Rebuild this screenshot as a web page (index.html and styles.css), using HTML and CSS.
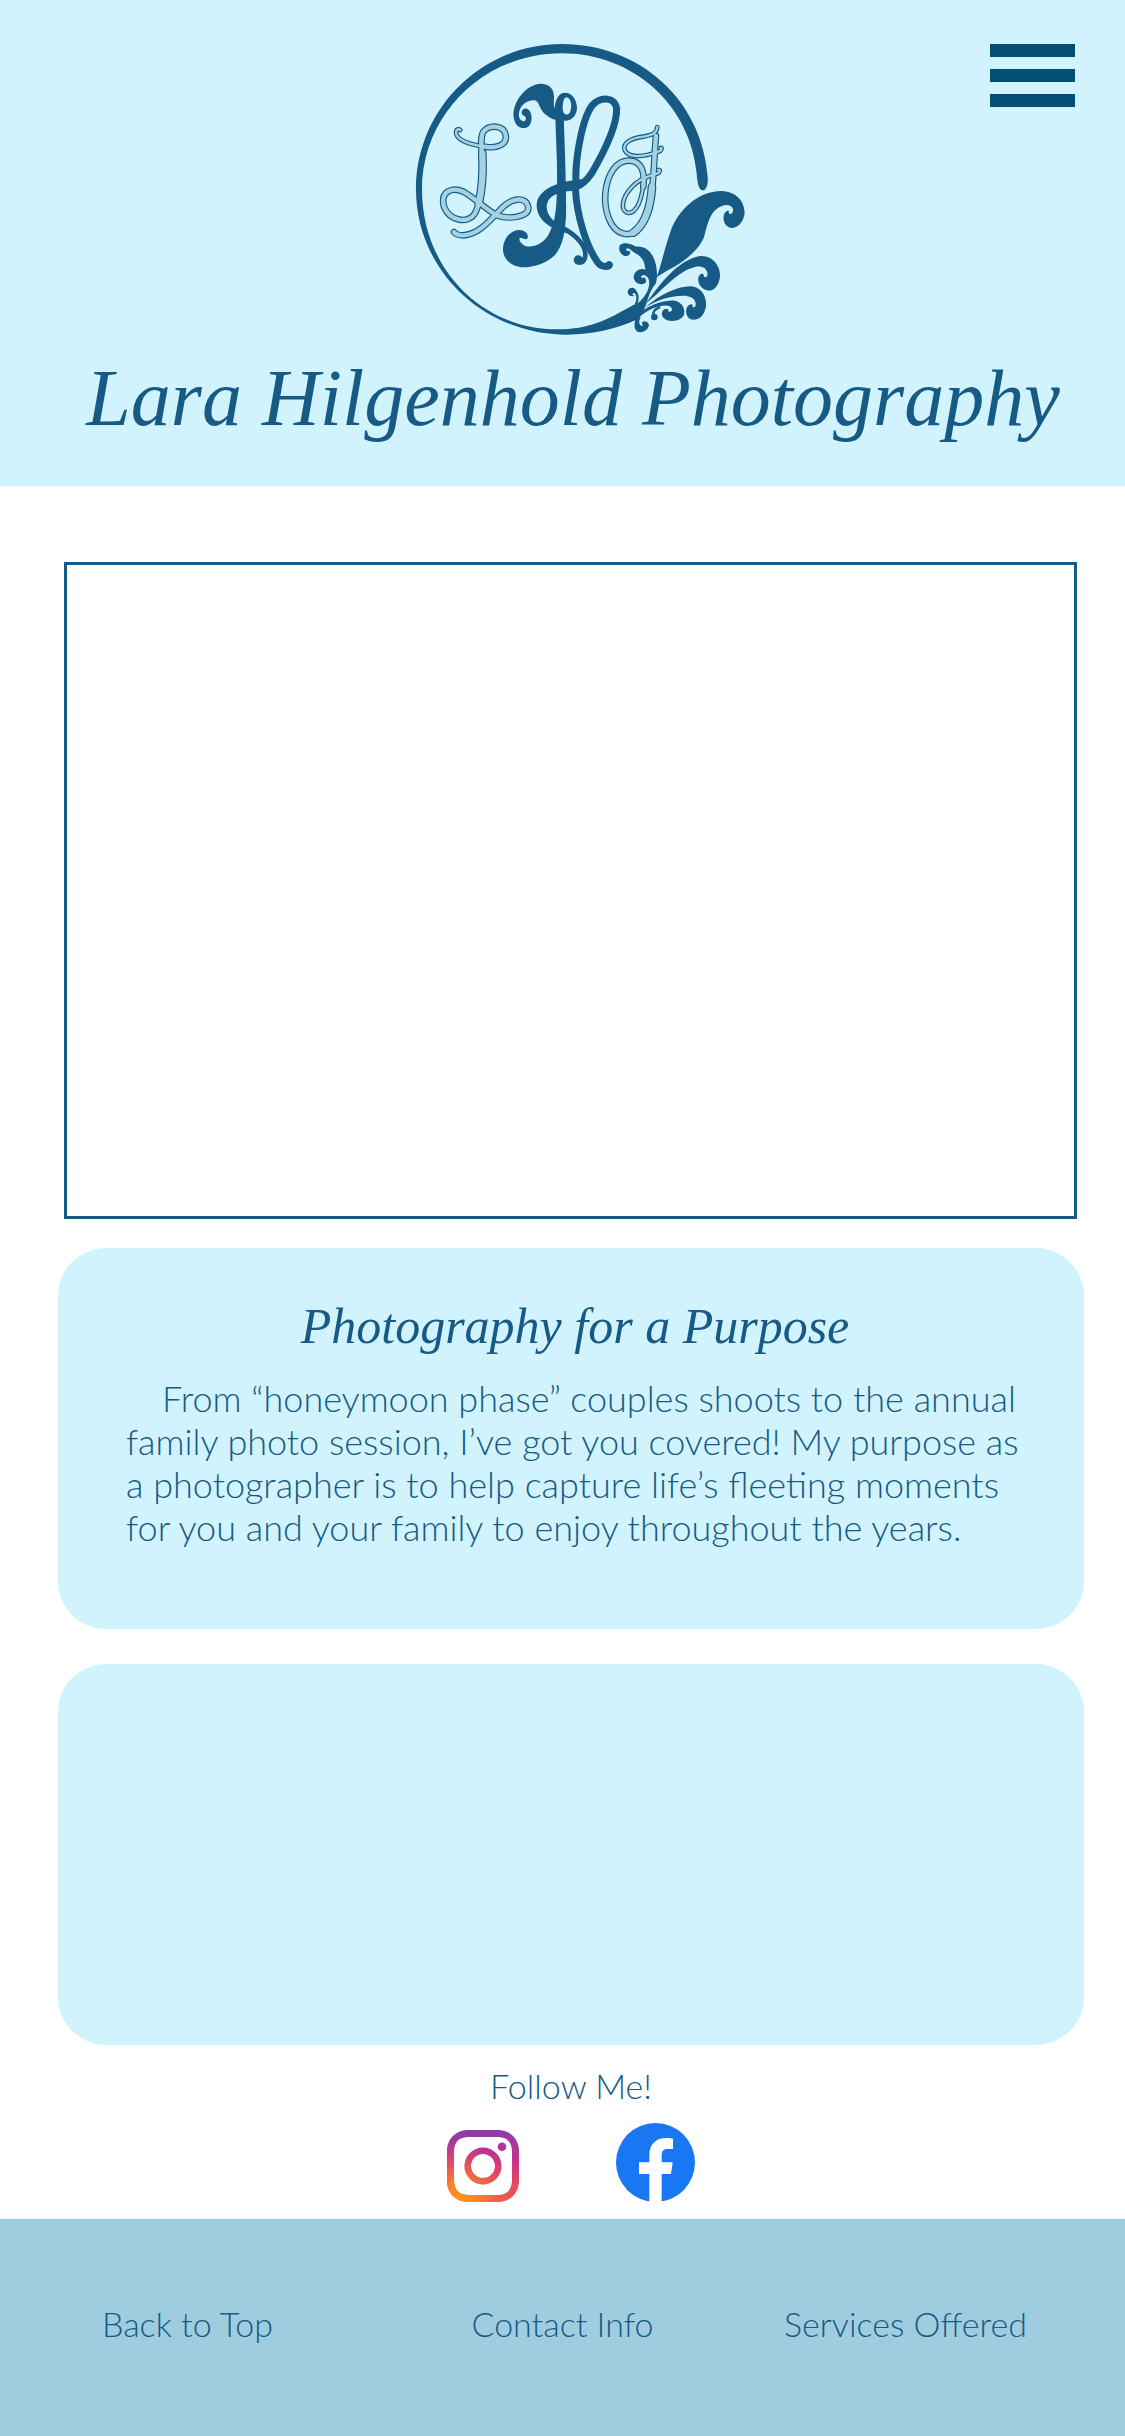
FILE: index.html
```html
<!DOCTYPE html>
<html lang="en">
<head>
<meta charset="utf-8">
<meta name="viewport" content="width=device-width, initial-scale=1">
<title>Lara Hilgenhold Photography</title>
<link rel="stylesheet" href="styles.css">
</head>
<body>
<header class="header" id="top">
  <svg class="logo" viewBox="0 0 1038 960" role="img" aria-label="Lara Hilgenhold Photography monogram">
    <defs>
      <g id="side-wide">
        <path d="M255,350C290,356 322,345 317,315C312,286 270,282 250,305C236,330 250,380 248,430C246,480 240,520 225,550C205,582 150,575 132,530C120,485 155,470 190,485C225,505 255,535 290,556C330,570 388,560 385,532C378,495 330,505 300,540C270,570 240,612 190,616C176,616 166,612 162,606"/>
        <path d="M768,318C762,380 762,470 748,535C730,600 700,614 675,612C630,605 612,540 616,490C622,430 650,390 690,392C725,395 735,425 730,470"/>
      </g>
      <g id="side-narrow">
        <path d="M181,300C170,292 162,308 175,322C190,338 220,345 255,350"/>
        <path d="M772,291C770,312 755,314 730,320C690,325 668,340 674,360C685,385 730,382 775,365C785,362 788,352 782,354"/>
        <path d="M732,440C728,510 710,550 683,549C658,540 668,500 695,472C715,448 745,438 770,431C782,428 782,416 774,420"/>
      </g>
      <g id="side-heavy">
        <path d="M247,370C250,430 246,480 236,520"/>
        <path d="M756,470C752,530 738,580 700,608"/>
      </g>
    </defs>
    <!-- ring -->
    <path class="ink" d="M923,440C905,205 715,42 485,42C244,42 48,237 48,478C48,720 250,914 500,914C580,914 650,897 712,868L735,830L700,825C620,870 570,898 470,898C250,898 66,720 66,478C66,255 250,70 485,70C700,70 870,225 890,430C892,470 900,481 908,481C918,481 925,465 923,440Z"/>
    <!-- centre letter -->
    <path class="ink" fill-rule="evenodd" d="M462,200C462,170 440,160 420,161C375,165 335,220 341,262C345,290 362,296 375,294C392,292 397,270 394,255C390,238 378,232 370,238C362,244 364,256 374,258C380,264 378,274 370,274C358,272 354,258 358,244C364,218 390,208 405,211C420,216 416,240 440,256C455,270 475,272 495,272C520,272 532,250 531,230C528,205 515,188 495,188C475,188 466,210 464,236C460,225 462,210 462,200ZM500,202C514,204 518,232 509,248C500,260 489,252 488,238C488,220 490,203 500,202Z"/>
    <path class="ink" d="M466,260L491,260C495,360 500,500 498,560C494,620 485,650 465,675C440,700 400,713 365,712C330,708 308,685 309,655C312,620 335,600 358,600C378,602 386,614 383,624C378,632 368,624 362,623C354,624 358,640 375,648C400,655 430,640 445,615C460,585 468,560 470,500C474,420 468,340 466,260Z"/>
    <path class="ink" d="M560,448C500,448 412,470 410,525C410,570 450,595 500,610L506,596C470,585 440,560 440,530C442,495 480,482 530,482Z"/>
    <path class="pen pen-thin" d="M485,592C530,615 562,650 555,682C550,702 532,700 530,690"/>
    <circle class="ink" cx="535" cy="690" r="14"/>
    <path class="pen" d="M529,470C522,400 545,270 576,227C600,200 646,198 650,238C650,290 610,370 575,430C560,452 545,465 526,472C530,560 560,650 593,697C605,712 625,712 628,704"/>
    <circle class="ink" cx="626" cy="706" r="11"/>
    <!-- side letters: dark outline first, pale fill over it -->
    <g class="side side-outline">
      <use href="#side-wide" class="wide"/>
      <use href="#side-narrow" class="narrow"/>
      <use href="#side-heavy" class="heavy"/>
    </g>
    <g class="side side-fill">
      <use href="#side-wide" class="wide"/>
      <use href="#side-narrow" class="narrow"/>
      <use href="#side-heavy" class="heavy"/>
    </g>
    <!-- leaves -->
    <path class="ink" d="M770,742C785,700 795,650 815,595C835,545 890,483 965,483C1010,485 1034,515 1034,550C1030,580 1010,596 992,594C970,588 966,560 975,548C980,541 990,540 986,549C990,556 1001,550 999,538C996,526 982,523 968,527C938,536 926,565 915,610C908,650 860,690 815,715C795,725 780,735 770,742Z"/>
    <path class="ink" d="M738,820C775,770 830,690 900,678C940,676 962,710 960,740C955,775 935,785 920,781C898,775 890,750 897,738C904,727 914,732 911,739C916,746 925,740 922,728C917,710 900,708 885,711C830,724 790,780 738,820Z"/>
    <path class="ink" d="M735,832C780,795 830,768 875,769C910,775 920,805 918,830C910,865 890,872 872,868C855,860 855,835 866,826C874,820 882,823 877,830C882,835 889,830 887,820C884,803 868,797 850,797C805,797 770,812 735,832Z"/>
    <path class="ink" d="M708,860C740,825 790,810 825,812C850,818 856,840 852,855C840,875 815,875 800,870C782,862 782,845 793,838C800,834 809,838 804,844C812,848 818,842 815,834C810,825 795,825 780,828C750,836 718,855 712,872Z"/>
    <path class="pen pen-fine" d="M778,832C764,838 757,846 761,856"/>
    <circle class="ink" cx="763" cy="861" r="10"/>
    <path class="ink" d="M716,856C704,864 698,892 710,904C724,911 744,903 747,886C746,875 733,870 727,876C724,883 731,885 727,888C718,888 714,876 722,862Z"/>
    <path class="ink" d="M771,742C773,690 750,645 708,650C692,640 672,635 660,645C652,660 665,680 680,678C690,676 694,667 688,662C680,665 676,659 681,655C692,655 698,668 714,674C735,690 733,705 737,719C720,713 702,724 701,742C703,762 727,769 738,757C740,746 733,739 727,744C721,744 723,735 731,735C752,738 753,770 735,796C728,807 718,820 690,832L712,868C748,830 735,800 768,760Z"/>
    <path class="pen pen-fine" d="M706,826C717,808 714,789 701,780"/>
    <circle class="ink" cx="696" cy="786" r="13"/>
    <circle class="paper" cx="702" cy="793" r="4"/>
  </svg>
  <button class="menu" type="button" aria-label="Menu">
    <span class="menu-bar"></span>
    <span class="menu-bar"></span>
    <span class="menu-bar"></span>
  </button>
  <h1 class="site-title">Lara Hilgenhold Photography</h1>
</header>

<main class="main">
  <div class="frame"></div>
  <section class="card">
    <h2 class="card-title">Photography for a Purpose</h2>
    <p class="card-text">From “honeymoon phase” couples shoots to the annual family photo session, I’ve got you covered! My purpose as a photographer is to help capture life’s fleeting moments for you and your family to enjoy throughout the years.</p>
  </section>
  <section class="card card-second"></section>
  <section class="follow">
    <p class="follow-text">Follow Me!</p>
    <div class="social">
      <a class="social-link" href="#instagram" aria-label="Instagram">
        <svg class="instagram" viewBox="0 0 72 72">
          <defs>
            <linearGradient id="ig-base" x1="0" y1="0" x2="0" y2="1">
              <stop offset="0" stop-color="#8a3aad"/>
              <stop offset=".45" stop-color="#cf3087"/>
              <stop offset=".75" stop-color="#e8485f"/>
              <stop offset="1" stop-color="#ea5a50"/>
            </linearGradient>
            <radialGradient id="ig-warm" gradientUnits="userSpaceOnUse" cx="12" cy="72" r="62">
              <stop offset="0" stop-color="#ff9a14"/>
              <stop offset=".3" stop-color="#fb8228"/>
              <stop offset="1" stop-color="#e8485f" stop-opacity="0"/>
            </radialGradient>
            <path id="ig-shape" fill-rule="evenodd" d="M21,0H51C63,0 72,9 72,21V51C72,63 63,72 51,72H21C9,72 0,63 0,51V21C0,9 9,0 21,0ZM22,7C12,7 7,12 7,22V50C7,60 12,65 22,65H50C60,65 65,60 65,50V22C65,12 60,7 50,7ZM36,17.500A18.500,18.500 0 1 1 36,54.500A18.500,18.500 0 1 1 36,17.500ZM36,24A12,12 0 1 0 36,48A12,12 0 1 0 36,24ZM55,12.500A4.300,4.300 0 1 1 55,21.100A4.300,4.300 0 1 1 55,12.500Z"/>
          </defs>
          <use href="#ig-shape" fill="url(#ig-base)"/>
          <use href="#ig-shape" fill="url(#ig-warm)"/>
        </svg>
      </a>
      <a class="social-link" href="#facebook" aria-label="Facebook">
        <svg class="facebook" viewBox="0 0 237 237">
          <circle cx="118.500" cy="118.500" r="118.500" fill="#1977f3"/>
          <path fill="#fff" d="M100,237V153H69V118H100V97C100,63 120,45 151,45C160,45 167,46 171,47V78H155C143,78 137,84 137,96V118H170L165,153H137V237Z"/>
        </svg>
      </a>
    </div>
  </section>
</main>

<footer class="footer">
  <a class="footer-link" href="#top">Back to Top</a>
  <a class="footer-link" href="#contact">Contact Info</a>
  <a class="footer-link" href="#services">Services Offered</a>
</footer>
</body>
</html>
```
FILE: styles.css
```css
* {
  box-sizing: border-box;
}

body {
  margin: 0;
  background: #fff;
  color: #165a85;
  font-family: Lato, sans-serif;
  font-size: 36px;
  font-weight: 300;
  line-height: 43px;
}

h1,
h2,
p {
  margin: 0;
}

.header {
  display: grid;
  grid-template-columns: 1fr;
  justify-items: center;
  padding: 30px 0 40px 21px;
  background: #d0f3fd;
}

.logo {
  grid-area: 1 / 1;
  width: 346px;
  height: 320px;
}

.ink {
  fill: #165a85;
}

.paper {
  fill: #d0f3fd;
}

.pen {
  fill: none;
  stroke: #165a85;
  stroke-width: 21px;
  stroke-linecap: round;
}

.pen-thin {
  stroke-width: 14px;
}

.pen-fine {
  stroke-width: 7px;
}

.side {
  fill: none;
  stroke-linecap: round;
  stroke-linejoin: round;
}

.side-outline {
  stroke: #165a85;
}

.side-outline .wide {
  stroke-width: 20px;
}

.side-outline .narrow {
  stroke-width: 14px;
}

.side-outline .heavy {
  stroke-width: 26px;
}

.side-fill {
  stroke: #a5d2e2;
}

.side-fill .wide {
  stroke-width: 13px;
}

.side-fill .narrow {
  stroke-width: 7px;
}

.side-fill .heavy {
  stroke-width: 19px;
}

.menu {
  grid-area: 1 / 1;
  justify-self: end;
  align-self: start;
  display: flex;
  flex-direction: column;
  gap: 12px;
  width: 85px;
  margin: 14px 50px 0 0;
  padding: 0;
  border: 0;
  background: none;
  cursor: pointer;
}

.menu-bar {
  height: 13px;
  background: #024e77;
}

.site-title {
  font-family: "Liberation Serif", serif;
  font-size: 80px;
  font-style: italic;
  font-weight: 400;
  line-height: 96px;
  text-align: center;
}

.main {
  padding: 76px 41px 17px 58px;
}

.frame {
  margin: 0 7px 29px 6px;
  aspect-ratio: 1013 / 657;
  border: 3px solid #165a85;
}

.card {
  min-height: 381px;
  padding: 48px 60px 48px 68px;
  border-radius: 48px;
  background: #d0f3fd;
}

.card-second {
  margin-top: 35px;
}

.card-title {
  font-family: "Liberation Serif", serif;
  font-size: 50px;
  font-style: italic;
  font-weight: 400;
  line-height: 60px;
  text-align: center;
}

.card-text {
  margin-top: 21px;
  text-indent: 36px;
}

.follow {
  display: flex;
  flex-direction: column;
  align-items: center;
  gap: 16px;
  padding-top: 19px;
}

.follow-text,
.footer-link {
  font-size: 34px;
}

.social {
  display: flex;
  align-items: flex-end;
  gap: 97px;
}

.social-link {
  display: flex;
}

.instagram {
  width: 72px;
  height: 72px;
}

.facebook {
  width: 79px;
  height: 79px;
}

.footer {
  display: grid;
  grid-template-columns: 375fr 375fr 311fr;
  justify-items: center;
  padding: 83px 64px 91px 0;
  background: #9fcddf;
}

.footer-link {
  color: inherit;
  text-decoration: none;
}
```
